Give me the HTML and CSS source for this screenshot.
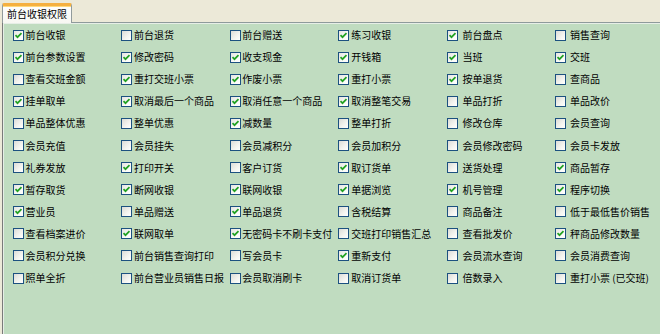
FILE: index.html
```html
<!DOCTYPE html>
<html lang="zh-CN">
<head>
<meta charset="utf-8">
<title>前台收银权限</title>
<link rel="stylesheet" href="styles.css">
</head>
<body>
<div class="tabs"><div class="tab">前台收银权限</div></div>
<div class="panel">
<div class="grid">
<label class="item"><span class="cb on"><svg class="mark" width="9" height="9" viewBox="0 0 9 9"><path d="M1.5 4.2 L3.5 6.2 L7.5 2.2"/></svg></span><span class="txt">前台收银</span></label>
<label class="item"><span class="cb"></span><span class="txt">前台退货</span></label>
<label class="item"><span class="cb"></span><span class="txt">前台赠送</span></label>
<label class="item"><span class="cb on"><svg class="mark" width="9" height="9" viewBox="0 0 9 9"><path d="M1.5 4.2 L3.5 6.2 L7.5 2.2"/></svg></span><span class="txt">练习收银</span></label>
<label class="item"><span class="cb on"><svg class="mark" width="9" height="9" viewBox="0 0 9 9"><path d="M1.5 4.2 L3.5 6.2 L7.5 2.2"/></svg></span><span class="txt">前台盘点</span></label>
<label class="item"><span class="cb"></span><span class="txt">销售查询</span></label>

<label class="item"><span class="cb on"><svg class="mark" width="9" height="9" viewBox="0 0 9 9"><path d="M1.5 4.2 L3.5 6.2 L7.5 2.2"/></svg></span><span class="txt">前台参数设置</span></label>
<label class="item"><span class="cb on"><svg class="mark" width="9" height="9" viewBox="0 0 9 9"><path d="M1.5 4.2 L3.5 6.2 L7.5 2.2"/></svg></span><span class="txt">修改密码</span></label>
<label class="item"><span class="cb on"><svg class="mark" width="9" height="9" viewBox="0 0 9 9"><path d="M1.5 4.2 L3.5 6.2 L7.5 2.2"/></svg></span><span class="txt">收支现金</span></label>
<label class="item"><span class="cb on"><svg class="mark" width="9" height="9" viewBox="0 0 9 9"><path d="M1.5 4.2 L3.5 6.2 L7.5 2.2"/></svg></span><span class="txt">开钱箱</span></label>
<label class="item"><span class="cb on"><svg class="mark" width="9" height="9" viewBox="0 0 9 9"><path d="M1.5 4.2 L3.5 6.2 L7.5 2.2"/></svg></span><span class="txt">当班</span></label>
<label class="item"><span class="cb on"><svg class="mark" width="9" height="9" viewBox="0 0 9 9"><path d="M1.5 4.2 L3.5 6.2 L7.5 2.2"/></svg></span><span class="txt">交班</span></label>

<label class="item"><span class="cb"></span><span class="txt">查看交班金额</span></label>
<label class="item"><span class="cb on"><svg class="mark" width="9" height="9" viewBox="0 0 9 9"><path d="M1.5 4.2 L3.5 6.2 L7.5 2.2"/></svg></span><span class="txt">重打交班小票</span></label>
<label class="item"><span class="cb on"><svg class="mark" width="9" height="9" viewBox="0 0 9 9"><path d="M1.5 4.2 L3.5 6.2 L7.5 2.2"/></svg></span><span class="txt">作废小票</span></label>
<label class="item"><span class="cb on"><svg class="mark" width="9" height="9" viewBox="0 0 9 9"><path d="M1.5 4.2 L3.5 6.2 L7.5 2.2"/></svg></span><span class="txt">重打小票</span></label>
<label class="item"><span class="cb on"><svg class="mark" width="9" height="9" viewBox="0 0 9 9"><path d="M1.5 4.2 L3.5 6.2 L7.5 2.2"/></svg></span><span class="txt">按单退货</span></label>
<label class="item"><span class="cb"></span><span class="txt">查商品</span></label>

<label class="item"><span class="cb on"><svg class="mark" width="9" height="9" viewBox="0 0 9 9"><path d="M1.5 4.2 L3.5 6.2 L7.5 2.2"/></svg></span><span class="txt">挂单取单</span></label>
<label class="item"><span class="cb on"><svg class="mark" width="9" height="9" viewBox="0 0 9 9"><path d="M1.5 4.2 L3.5 6.2 L7.5 2.2"/></svg></span><span class="txt">取消最后一个商品</span></label>
<label class="item"><span class="cb on"><svg class="mark" width="9" height="9" viewBox="0 0 9 9"><path d="M1.5 4.2 L3.5 6.2 L7.5 2.2"/></svg></span><span class="txt">取消任意一个商品</span></label>
<label class="item"><span class="cb on"><svg class="mark" width="9" height="9" viewBox="0 0 9 9"><path d="M1.5 4.2 L3.5 6.2 L7.5 2.2"/></svg></span><span class="txt">取消整笔交易</span></label>
<label class="item"><span class="cb"></span><span class="txt">单品打折</span></label>
<label class="item"><span class="cb"></span><span class="txt">单品改价</span></label>

<label class="item"><span class="cb"></span><span class="txt">单品整体优惠</span></label>
<label class="item"><span class="cb"></span><span class="txt">整单优惠</span></label>
<label class="item"><span class="cb on"><svg class="mark" width="9" height="9" viewBox="0 0 9 9"><path d="M1.5 4.2 L3.5 6.2 L7.5 2.2"/></svg></span><span class="txt">减数量</span></label>
<label class="item"><span class="cb"></span><span class="txt">整单打折</span></label>
<label class="item"><span class="cb"></span><span class="txt">修改仓库</span></label>
<label class="item"><span class="cb"></span><span class="txt">会员查询</span></label>

<label class="item"><span class="cb"></span><span class="txt">会员充值</span></label>
<label class="item"><span class="cb"></span><span class="txt">会员挂失</span></label>
<label class="item"><span class="cb"></span><span class="txt">会员减积分</span></label>
<label class="item"><span class="cb"></span><span class="txt">会员加积分</span></label>
<label class="item"><span class="cb"></span><span class="txt">会员修改密码</span></label>
<label class="item"><span class="cb"></span><span class="txt">会员卡发放</span></label>

<label class="item"><span class="cb"></span><span class="txt">礼券发放</span></label>
<label class="item"><span class="cb on"><svg class="mark" width="9" height="9" viewBox="0 0 9 9"><path d="M1.5 4.2 L3.5 6.2 L7.5 2.2"/></svg></span><span class="txt">打印开关</span></label>
<label class="item"><span class="cb"></span><span class="txt">客户订货</span></label>
<label class="item"><span class="cb on"><svg class="mark" width="9" height="9" viewBox="0 0 9 9"><path d="M1.5 4.2 L3.5 6.2 L7.5 2.2"/></svg></span><span class="txt">取订货单</span></label>
<label class="item"><span class="cb"></span><span class="txt">送货处理</span></label>
<label class="item"><span class="cb on"><svg class="mark" width="9" height="9" viewBox="0 0 9 9"><path d="M1.5 4.2 L3.5 6.2 L7.5 2.2"/></svg></span><span class="txt">商品暂存</span></label>

<label class="item"><span class="cb on"><svg class="mark" width="9" height="9" viewBox="0 0 9 9"><path d="M1.5 4.2 L3.5 6.2 L7.5 2.2"/></svg></span><span class="txt">暂存取货</span></label>
<label class="item"><span class="cb on"><svg class="mark" width="9" height="9" viewBox="0 0 9 9"><path d="M1.5 4.2 L3.5 6.2 L7.5 2.2"/></svg></span><span class="txt">断网收银</span></label>
<label class="item"><span class="cb on"><svg class="mark" width="9" height="9" viewBox="0 0 9 9"><path d="M1.5 4.2 L3.5 6.2 L7.5 2.2"/></svg></span><span class="txt">联网收银</span></label>
<label class="item"><span class="cb on"><svg class="mark" width="9" height="9" viewBox="0 0 9 9"><path d="M1.5 4.2 L3.5 6.2 L7.5 2.2"/></svg></span><span class="txt">单据浏览</span></label>
<label class="item"><span class="cb on"><svg class="mark" width="9" height="9" viewBox="0 0 9 9"><path d="M1.5 4.2 L3.5 6.2 L7.5 2.2"/></svg></span><span class="txt">机号管理</span></label>
<label class="item"><span class="cb on"><svg class="mark" width="9" height="9" viewBox="0 0 9 9"><path d="M1.5 4.2 L3.5 6.2 L7.5 2.2"/></svg></span><span class="txt">程序切换</span></label>

<label class="item"><span class="cb on"><svg class="mark" width="9" height="9" viewBox="0 0 9 9"><path d="M1.5 4.2 L3.5 6.2 L7.5 2.2"/></svg></span><span class="txt">营业员</span></label>
<label class="item"><span class="cb"></span><span class="txt">单品赠送</span></label>
<label class="item"><span class="cb on"><svg class="mark" width="9" height="9" viewBox="0 0 9 9"><path d="M1.5 4.2 L3.5 6.2 L7.5 2.2"/></svg></span><span class="txt">单品退货</span></label>
<label class="item"><span class="cb"></span><span class="txt">含税结算</span></label>
<label class="item"><span class="cb"></span><span class="txt">商品备注</span></label>
<label class="item"><span class="cb"></span><span class="txt">低于最低售价销售</span></label>

<label class="item"><span class="cb"></span><span class="txt">查看档案进价</span></label>
<label class="item"><span class="cb on"><svg class="mark" width="9" height="9" viewBox="0 0 9 9"><path d="M1.5 4.2 L3.5 6.2 L7.5 2.2"/></svg></span><span class="txt">联网取单</span></label>
<label class="item"><span class="cb on"><svg class="mark" width="9" height="9" viewBox="0 0 9 9"><path d="M1.5 4.2 L3.5 6.2 L7.5 2.2"/></svg></span><span class="txt">无密码卡不刷卡支付</span></label>
<label class="item"><span class="cb"></span><span class="txt">交班打印销售汇总</span></label>
<label class="item"><span class="cb"></span><span class="txt">查看批发价</span></label>
<label class="item"><span class="cb on"><svg class="mark" width="9" height="9" viewBox="0 0 9 9"><path d="M1.5 4.2 L3.5 6.2 L7.5 2.2"/></svg></span><span class="txt">秤商品修改数量</span></label>

<label class="item"><span class="cb"></span><span class="txt">会员积分兑换</span></label>
<label class="item"><span class="cb"></span><span class="txt">前台销售查询打印</span></label>
<label class="item"><span class="cb"></span><span class="txt">写会员卡</span></label>
<label class="item"><span class="cb on"><svg class="mark" width="9" height="9" viewBox="0 0 9 9"><path d="M1.5 4.2 L3.5 6.2 L7.5 2.2"/></svg></span><span class="txt">重新支付</span></label>
<label class="item"><span class="cb"></span><span class="txt">会员流水查询</span></label>
<label class="item"><span class="cb"></span><span class="txt">会员消费查询</span></label>

<label class="item"><span class="cb"></span><span class="txt">照单全折</span></label>
<label class="item"><span class="cb"></span><span class="txt">前台营业员销售日报</span></label>
<label class="item"><span class="cb"></span><span class="txt">会员取消刷卡</span></label>
<label class="item"><span class="cb"></span><span class="txt">取消订货单</span></label>
<label class="item"><span class="cb"></span><span class="txt">倍数录入</span></label>
<label class="item"><span class="cb"></span><span class="txt">重打小票 (已交班)</span></label>
</div>
</div>
</body>
</html>
```
FILE: styles.css
```css
html, body {
  margin: 0;
  padding: 0;
  background: #ece9d8;
  width: 660px;
  height: 334px;
  overflow: hidden;
  font-family: "Noto Sans CJK SC", "Liberation Sans", sans-serif;
  font-size: 10px;
  color: #000;
}
.tabs {
  padding: 3px 0 0 2px;
  height: 19px;
  position: relative;
  z-index: 1;
}
.tab {
  display: inline-block;
  box-sizing: border-box;
  width: 70px;
  height: 20px;
  background: linear-gradient(#fefefe, #f7f7f2);
  border: 1px solid #919b9c;
  border-bottom: none;
  border-top: 3px solid #f5b040;
  box-shadow: inset 0 1px 0 #ffd97a;
  border-radius: 2px 2px 0 0;
  text-align: center;
  line-height: 16px;
  font-size: 10px;
}
.panel {
  margin-left: 2px;
  height: 312px;
  box-sizing: border-box;
  background: #c0dcc0;
  border-top: 1px solid #8e9a9b;
  border-left: 1px solid #7a7a7a;
  box-shadow: inset 1px 1px 0 #e6eee6;
  padding: 1px 0 0 10px;
}
.grid {
  display: grid;
  grid-template-columns: repeat(6, 108.4px);
  grid-auto-rows: 22.1px;
}
.item {
  display: flex;
  align-items: center;
  gap: 1.5px;
  white-space: nowrap;
}
.item:nth-child(6n+5) { gap: 5px; }
.item:nth-child(6n) { gap: 4px; }
.item:nth-child(6n+4) { gap: 2px; }
.cb {
  flex: none;
  box-sizing: border-box;
  width: 11px;
  height: 11px;
  border: 1px solid #1c5180;
  background: linear-gradient(135deg, #dcdcd7 0%, #f4f4f0 60%, #fff 100%);
  display: flex;
  align-items: center;
  justify-content: center;
}
.cb.on {
  background: linear-gradient(135deg, #e4e4e0 0%, #fafaf8 60%, #fff 100%);
}
.mark {
  display: block;
}
.mark path {
  fill: none;
  stroke: #21a121;
  stroke-width: 1.7;
}
.txt {
  line-height: 12px;
}
```
